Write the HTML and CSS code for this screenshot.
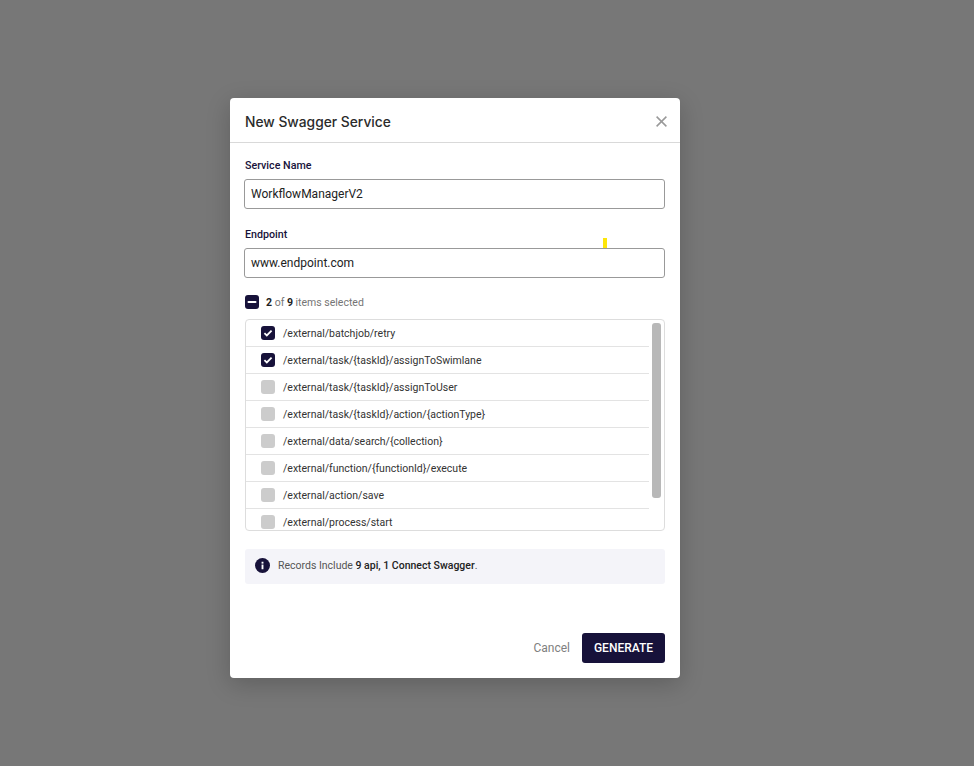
FILE: index.html
```html
<!DOCTYPE html>
<html lang="en">
<head>
  <meta charset="UTF-8" />
  <title>New Swagger Service</title>
  <link rel="stylesheet" href="styles.css">
</head>
<body>
  <div class="modal">
    <header class="modal-header">
      <h2>New Swagger Service</h2>
      <svg class="close" width="11" height="11" viewBox="0 0 11 11"><path d="M.6.6l9.8 9.8M10.4.6L.6 10.4" stroke="#999" stroke-width="1.5" fill="none"/></svg>
    </header>

    <section class="modal-body">
      <label class="field-label">Service Name</label>
      <div class="input">WorkflowManagerV2</div>

      <label class="field-label second">Endpoint</label>
      <div class="input endpoint">www.endpoint.com<span class="marker"></span></div>

      <div class="summary">
        <span class="box on"><svg width="14" height="14" viewBox="0 0 14 14"><path d="M3.5 7h7" stroke="#fff" stroke-width="2" stroke-linecap="round"/></svg></span>
        <span><b>2</b> <i>of</i> <b>9</b> <i>items selected</i></span>
      </div>

      <div class="list">
        <ul>
          <li><span class="box on"><svg width="14" height="14" viewBox="0 0 14 14"><path d="M3.4 7.2l2.4 2.3 4.8-4.8" stroke="#fff" stroke-width="1.8" fill="none"/></svg></span>/external/batchjob/retry</li>
          <li><span class="box on"><svg width="14" height="14" viewBox="0 0 14 14"><path d="M3.4 7.2l2.4 2.3 4.8-4.8" stroke="#fff" stroke-width="1.8" fill="none"/></svg></span>/external/task/{taskId}/assignToSwimlane</li>
          <li><span class="box"></span>/external/task/{taskId}/assignToUser</li>
          <li><span class="box"></span>/external/task/{taskId}/action/{actionType}</li>
          <li><span class="box"></span>/external/data/search/{collection}</li>
          <li><span class="box"></span>/external/function/{functionId}/execute</li>
          <li><span class="box"></span>/external/action/save</li>
          <li><span class="box"></span>/external/process/start</li>
        </ul>
        <div class="scrollbar"></div>
      </div>

      <div class="notice">
        <svg width="15" height="15" viewBox="0 0 16 16"><circle cx="8" cy="8" r="8" fill="#17123a"/><rect x="7" y="7" width="2" height="5" fill="#fff"/><rect x="7" y="4" width="2" height="2" fill="#fff"/></svg>
        <span>Records Include <b>9 api, 1 Connect Swagger</b>.</span>
      </div>
    </section>

    <footer class="modal-footer">
      <a class="cancel">Cancel</a>
      <button class="generate">GENERATE</button>
    </footer>
  </div>
</body>
</html>
```
FILE: styles.css
```css
body {
  margin: 0;
  height: 766px;
  box-sizing: border-box;
  padding: 98px 0 0 230px;
  overflow: hidden;
  background: #777777;
  font-family: 'Roboto', sans-serif;
  color: #222;
}
.modal {
  width: 450px;
  height: 580px;
  background: #fff;
  border-radius: 4px;
  box-shadow: 0 6px 24px rgba(0,0,0,0.2);
  display: flex;
  flex-direction: column;
}
.modal-header {
  box-sizing: border-box;
  height: 45px;
  padding: 2px 13px 0 15px;
  display: flex;
  align-items: center;
  justify-content: space-between;
  border-bottom: 1px solid #d9d9d9;
}
.modal-header h2 {
  margin: 2px 0 0;
  font-family: 'Inter', sans-serif;
  font-size: 13.8px;
  font-weight: 500;
  color: #2b2b2b;
}
.modal-body {
  flex: 1;
  padding: 16px 15px 0 14px;
}
.field-label {
  display: block;
  font-size: 10.7px;
  font-weight: 500;
  line-height: 14px;
  color: #17123a;
  margin: 0 0 6px 1px;
}
.field-label.second {
  margin-top: 19px;
}
.input {
  position: relative;
  box-sizing: border-box;
  height: 30px;
  border: 1px solid #999;
  border-radius: 3px;
  padding: 0 6px;
  font-size: 12px;
  line-height: 28px;
  color: #222;
}
.marker {
  position: absolute;
  left: 358px;
  top: -11px;
  width: 4px;
  height: 10px;
  background: #fde60a;
}
.summary {
  display: flex;
  align-items: center;
  gap: 7px;
  margin: 17px 0 0 1px;
  height: 14px;
  font-size: 10.5px;
  color: #222;
}
.summary i {
  font-style: normal;
  color: #757575;
}
.box {
  flex: none;
  width: 14px;
  height: 14px;
  border-radius: 3px;
  background: #cccccc;
}
.box svg {
  display: block;
}
.box.on {
  background: #17123a;
}
.list {
  position: relative;
  height: 212px;
  box-sizing: border-box;
  margin: 10px 0 0 1px;
  border: 1px solid #dddddd;
  border-radius: 4px;
  overflow: hidden;
}
.list ul {
  list-style: none;
  margin: 0;
  padding: 0 15px 0 0;
}
.list li {
  display: flex;
  align-items: center;
  gap: 8px;
  box-sizing: border-box;
  height: 27px;
  padding-left: 15px;
  font-size: 10.5px;
  color: #333;
  border-bottom: 1px solid #e3e3e3;
}
.scrollbar {
  position: absolute;
  top: 3px;
  right: 3px;
  width: 9px;
  height: 175px;
  border-radius: 3px;
  background: #b8b8b8;
}
.notice {
  display: flex;
  align-items: center;
  gap: 8px;
  height: 35px;
  margin: 18px 0 0 1px;
  padding-left: 10px;
  border-radius: 3px;
  background: #f4f4f9;
  font-size: 10.5px;
  color: #555;
}
.notice span {
  margin-top: -2px;
}
.notice b {
  color: #222;
  font-weight: 500;
}
.notice svg {
  flex: none;
  margin-top: -2px;
}
.modal-footer {
  display: flex;
  align-items: center;
  justify-content: flex-end;
  gap: 12px;
  padding: 0 15px 15px;
}
.cancel {
  font-size: 12px;
  color: #808080;
}
.generate {
  width: 83px;
  height: 30px;
  padding: 0;
  border: 0;
  border-radius: 3px;
  background: #17123a;
  color: #fff;
  font-family: 'Roboto', sans-serif;
  font-size: 12px;
  font-weight: 500;
}
```
